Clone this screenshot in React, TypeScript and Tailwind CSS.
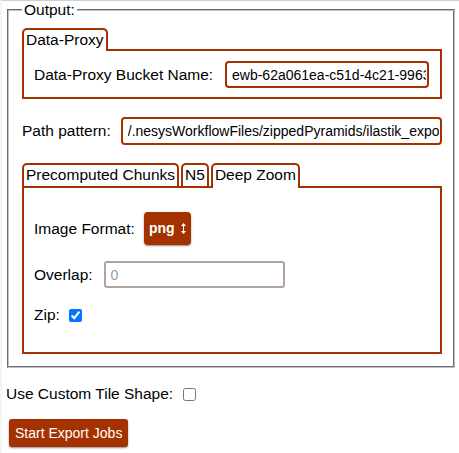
import type { ReactNode } from "react";

const RUST = "border-[#a33200]";

function Tab({ label, active, tall }: { label: string; active?: boolean; tall?: boolean }) {
  return (
    <div
      className={`relative mb-[-2px] rounded-t-[5px] border-2 border-b-0 ${RUST} px-[2px] leading-[18px] ${
        tall ? "pt-[1px] pb-[4px]" : "pt-[1px] pb-[2px]"
      } ${active ? "z-10 bg-white" : ""}`}
    >
      {label}
    </div>
  );
}

function Panel({ className, children }: { className: string; children: ReactNode }) {
  return <div className={`border-2 ${RUST} ${className}`}>{children}</div>;
}

function UpDown() {
  return (
    <svg width="5" height="11" viewBox="0 0 5 11" className="ml-[6px]" aria-hidden>
      <path d="M2.5 0 L5 3 L0 3 Z M2.5 11 L5 8 L0 8 Z" fill="white" />
      <rect x="2" y="2" width="1" height="7" fill="white" />
    </svg>
  );
}

export default function App() {
  return (
    <div className="h-[453px] w-[459px] overflow-hidden border-t border-l-2 border-t-[#cfcfcf] border-l-[#f5f5f5] bg-white font-['Liberation_Sans',Arial,sans-serif] text-[15.5px] text-black">
      <fieldset className="ml-[5px] mr-[4px] border-2 border-[#c0c0c0] [border-style:groove] pt-[9px] pr-[11px] pb-[12px] pl-[13px]">
        <legend className="px-[2px] leading-[18px]">Output:</legend>

        <div className="flex items-end">
          <Tab label="Data-Proxy" active />
        </div>
        <Panel className="flex items-center pt-[10px] pr-[11px] pb-[9px] pl-[10px]">
          <span className="leading-[18px]">Data-Proxy Bucket Name:</span>
          <input
            readOnly
            value="ewb-62a061ea-c51d-4c21-9963-7d3a1b5e0f24"
            className={`ml-auto h-[27px] w-[204px] rounded-[4px] border-2 ${RUST} pl-[5px] pr-[1px] text-[14px] outline-none`}
          />
        </Panel>

        <div className="mt-[18px] flex items-center gap-[10px]">
          <span className="leading-[18px]">Path pattern:</span>
          <input
            readOnly
            value="/.nesysWorkflowFiles/zippedPyramids/ilastik_export"
            className={`h-[28px] min-w-0 flex-1 rounded-[4px] border-2 ${RUST} pl-[5px] pr-[1px] text-[14px] outline-none`}
          />
        </div>

        <div className="mt-[18px] flex items-end gap-[2px]">
          <Tab label="Precomputed Chunks" tall />
          <Tab label="N5" tall />
          <Tab label="Deep Zoom" tall active />
        </div>
        <Panel className="pt-[24px] pb-[28px] pl-[10px]">
          <div className="flex items-center">
            <span className="leading-[18px]">Image Format:</span>
            <div className="ml-[9px] flex h-[33px] w-[47px] items-center justify-center rounded-[4px] bg-[#a33200] text-[14px] font-bold text-white shadow-[0_1px_2px_rgba(0,0,0,0.45)]">
              png
              <UpDown />
            </div>
          </div>
          <div className="mt-[16px] flex items-center">
            <span className="leading-[18px]">Overlap:</span>
            <input
              placeholder="0"
              className="ml-[11px] h-[27px] w-[181px] rounded-[3px] border-2 border-[#b0a49f] px-[5px] text-[14px] outline-none placeholder:text-[#9a9a9a]"
            />
          </div>
          <div className="mt-[18px] flex items-center">
            <span className="leading-[18px]">Zip:</span>
            <input type="checkbox" defaultChecked className="ml-[9px] h-[13px] w-[13px]" />
          </div>
        </Panel>
      </fieldset>

      <div className="mt-[17px] flex items-center pl-[4px]">
        <span className="leading-[18px]">Use Custom Tile Shape:</span>
        <input type="checkbox" className="ml-[10px] h-[13px] w-[13px]" />
      </div>

      <button className="mt-[16px] ml-[7px] h-[28px] rounded-[3px] bg-[#a33200] px-[6px] text-[14px] text-white shadow-[0_1px_2px_rgba(0,0,0,0.45)]">
        Start Export Jobs
      </button>
    </div>
  );
}
